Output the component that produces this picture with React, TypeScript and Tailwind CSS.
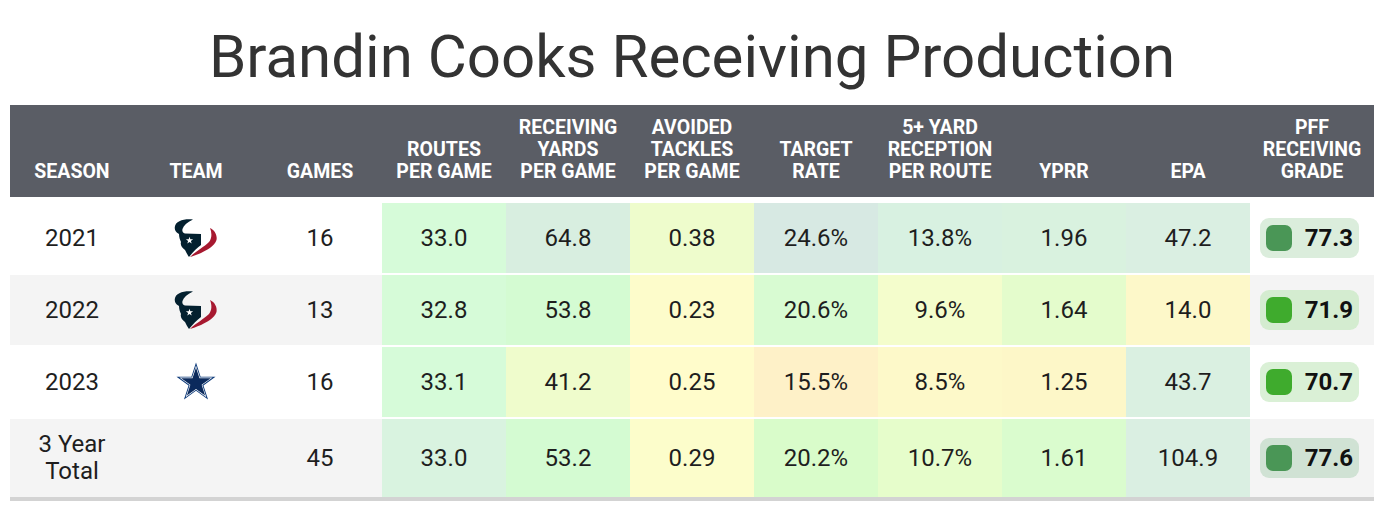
import React from 'react';

type Cell = { v: string; bg: string };
type Row = {
  season: string;
  team: 'HOU' | 'DAL' | '';
  games: string;
  cells: Cell[];
  grade: string;
  pill: string;
  dot: string;
  total?: boolean;
  shaded?: boolean;
};

const headers: string[][] = [
  ['SEASON'],
  ['TEAM'],
  ['GAMES'],
  ['ROUTES', 'PER GAME'],
  ['RECEIVING', 'YARDS', 'PER GAME'],
  ['AVOIDED', 'TACKLES', 'PER GAME'],
  ['TARGET', 'RATE'],
  ['5+ YARD', 'RECEPTION', 'PER ROUTE'],
  ['YPRR'],
  ['EPA'],
  ['PFF', 'RECEIVING', 'GRADE'],
];

const rows: Row[] = [
  {
    season: '2021',
    team: 'HOU',
    games: '16',
    cells: [
      { v: '33.0', bg: 'bg-[#d6fbd9]' },
      { v: '64.8', bg: 'bg-[#d8eee0]' },
      { v: '0.38', bg: 'bg-[#eefccc]' },
      { v: '24.6%', bg: 'bg-[#d7e9e3]' },
      { v: '13.8%', bg: 'bg-[#d8f1e1]' },
      { v: '1.96', bg: 'bg-[#d9f2df]' },
      { v: '47.2', bg: 'bg-[#daefe2]' },
    ],
    grade: '77.3',
    pill: 'bg-[#dbeddc]',
    dot: 'bg-[#4a9656]',
  },
  {
    season: '2022',
    team: 'HOU',
    games: '13',
    shaded: true,
    cells: [
      { v: '32.8', bg: 'bg-[#d6fbd8]' },
      { v: '53.8', bg: 'bg-[#d4fbd2]' },
      { v: '0.23', bg: 'bg-[#fdfccb]' },
      { v: '20.6%', bg: 'bg-[#d8fbd2]' },
      { v: '9.6%', bg: 'bg-[#f4fdcc]' },
      { v: '1.64', bg: 'bg-[#e4fccc]' },
      { v: '14.0', bg: 'bg-[#fdf8c9]' },
    ],
    grade: '71.9',
    pill: 'bg-[#d4ecd0]',
    dot: 'bg-[#3fab2d]',
  },
  {
    season: '2023',
    team: 'DAL',
    games: '16',
    cells: [
      { v: '33.1', bg: 'bg-[#d6fbd9]' },
      { v: '41.2', bg: 'bg-[#effccc]' },
      { v: '0.25', bg: 'bg-[#fffccb]' },
      { v: '15.5%', bg: 'bg-[#fef1c8]' },
      { v: '8.5%', bg: 'bg-[#fdf9c9]' },
      { v: '1.25', bg: 'bg-[#fdf7c8]' },
      { v: '43.7', bg: 'bg-[#daf0e1]' },
    ],
    grade: '70.7',
    pill: 'bg-[#daf0d6]',
    dot: 'bg-[#3fab2d]',
  },
  {
    season: '3 Year Total',
    team: '',
    games: '45',
    total: true,
    shaded: true,
    cells: [
      { v: '33.0', bg: 'bg-[#d9f3e0]' },
      { v: '53.2', bg: 'bg-[#d4fbd2]' },
      { v: '0.29', bg: 'bg-[#fcfdcb]' },
      { v: '20.2%', bg: 'bg-[#d9fcca]' },
      { v: '10.7%', bg: 'bg-[#e6fdcb]' },
      { v: '1.61', bg: 'bg-[#dafcce]' },
      { v: '104.9', bg: 'bg-[#daefe2]' },
    ],
    grade: '77.6',
    pill: 'bg-[#d0e2d4]',
    dot: 'bg-[#4a9656]',
  },
];

const starPoints = (cx: number, cy: number, R: number) => {
  const r = R * 0.382;
  const pts: string[] = [];
  for (let i = 0; i < 10; i++) {
    const a = ((-90 + i * 36) * Math.PI) / 180;
    const rad = i % 2 === 0 ? R : r;
    pts.push(`${(cx + rad * Math.cos(a)).toFixed(2)},${(cy + rad * Math.sin(a)).toFixed(2)}`);
  }
  return pts.join(' ');
};

const TexansLogo = () => (
  <svg width="44" height="38" viewBox="0 0 44 38">
    {/* horn + head */}
    <path
      d="M19 0.5 C10 -0.5 1.5 2 0.8 8 C0.4 12 3 14 5 15 C5 18 6 21 7 23 C6 26 8 29 11 31 C12 33 13 35 15 38 C19 33 23 29 27 26 L27 15 L11 14.5 C8.5 14 8 12 8.5 10 C9.5 6.5 13 3.5 19 0.5 Z"
      fill="#03202f"
    />
    <polygon points={starPoints(15.5, 21.5, 3.8)} fill="#ffffff" />
    {/* red cheek + right horn */}
    <path
      d="M16 38 C22 32 30 28 35 23 C38 19 38 14 36 9 C40.5 11 43.5 16 42.5 21 C40.5 27 33 31 27 34 C22 36 19 37 16 38 Z"
      fill="#a71930"
    />
  </svg>
);

const CowboysLogo = () => (
  <svg width="42" height="40" viewBox="0 0 42 40">
    <polygon points={starPoints(21, 21, 20.5)} fill="#0d3a7a" />
    <polygon points={starPoints(21, 21, 17.5)} fill="#ffffff" />
    <polygon points={starPoints(21, 21, 15.5)} fill="#0b2a5c" />
  </svg>
);

export default function App() {
  return (
    <div className="w-[1384px] h-[510px] bg-white font-['Roboto',sans-serif] text-[#1e1e1e]">
      <h1 className="h-[105px] flex items-center justify-center pt-[8px] text-[60px] text-[#333333] font-normal">
        Brandin Cooks Receiving Production
      </h1>

      <div className="px-[10px]">
        {/* header */}
        <div className="grid grid-cols-[repeat(11,124px)] h-[92px] bg-[#5a5d65]">
          {headers.map((h, i) => (
            <div key={i} className="flex flex-col justify-end items-center pb-[14px] text-white font-bold text-[19.5px] leading-[22px] text-center">
              {h.map(line => (
                <span key={line} className="whitespace-nowrap">{line}</span>
              ))}
            </div>
          ))}
        </div>

        {/* body */}
        <div className="flex flex-col gap-[2px] pt-[6px]">
          {rows.map(r => (
            <div
              key={r.season}
              className={`grid grid-cols-[repeat(11,124px)] ${r.total ? 'h-[78px]' : 'h-[70px]'} ${r.shaded ? 'bg-[#f4f4f4]' : 'bg-white'} text-[24px]`}
            >
              <div className="flex items-center justify-center text-center leading-[27px]">
                {r.total ? (
                  <span>3 Year<br />Total</span>
                ) : (
                  r.season
                )}
              </div>
              <div className="flex items-center justify-center">
                {r.team === 'HOU' && <TexansLogo />}
                {r.team === 'DAL' && <CowboysLogo />}
              </div>
              <div className="flex items-center justify-center">{r.games}</div>
              {r.cells.map((c, i) => (
                <div key={i} className={`flex items-center justify-center ${c.bg}`}>
                  {c.v}
                </div>
              ))}
              <div className="flex items-center pl-[10px]">
                <div className={`flex items-center justify-between w-[99px] h-[40px] rounded-[9px] pl-[6px] pr-[6px] ${r.pill}`}>
                  <span className={`w-[26px] h-[26px] rounded-[7px] ${r.dot}`} />
                  <span className="font-bold text-[24px] text-[#111111]">{r.grade}</span>
                </div>
              </div>
            </div>
          ))}
        </div>
        <div className="h-[4px] bg-[#d3d3d3]" />
      </div>
    </div>
  );
}
